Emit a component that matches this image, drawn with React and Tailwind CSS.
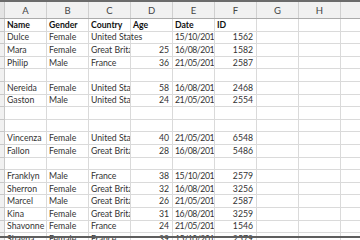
const cols = ["A", "B", "C", "D", "E", "F", "G", "H", ""];

const rows = [
  { head: true, cells: ["Name", "Gender", "Country", "Age", "Date", "ID"] },
  { cells: ["Dulce", "Female", "United States", "", "15/10/201", "1562"], spill: true },
  { cells: ["Mara", "Female", "Great Britain", "25", "16/08/201", "1582"] },
  { cells: ["Philip", "Male", "France", "36", "21/05/201", "2587"] },
  { cells: [] },
  { cells: ["Nereida", "Female", "United States", "58", "16/08/201", "2468"] },
  { cells: ["Gaston", "Male", "United States", "24", "21/05/201", "2554"] },
  { cells: [] },
  { cells: [] },
  { cells: ["Vincenza", "Female", "United States", "40", "21/05/201", "6548"] },
  { cells: ["Fallon", "Female", "Great Britain", "28", "16/08/201", "5486"] },
  { cells: [] },
  { cells: ["Franklyn", "Male", "France", "38", "15/10/201", "2579"] },
  { cells: ["Sherron", "Female", "Great Britain", "32", "16/08/201", "3256"] },
  { cells: ["Marcel", "Male", "Great Britain", "26", "21/05/201", "2587"] },
  { cells: ["Kina", "Female", "Great Britain", "31", "16/08/201", "3259"] },
  { cells: ["Shavonne", "Female", "France", "24", "21/05/201", "1546"] },
  { cells: ["Shayna", "Female", "France", "39", "15/10/201", "2579"] },
];

function Cell({ value, index, head, spill }) {
  const numeric = index === 3 || index === 5;
  const overflow = spill && index === 2 ? "overflow-visible z-10" : "overflow-hidden";
  const date = index === 4 && !head ? "tracking-[-0.45px]" : "";
  return (
    <div
      className={`relative flex h-full w-[42px] shrink-0 items-end border-r border-b border-[#dadada] pb-[1px] ${overflow} ${
        numeric && !head ? "justify-end pr-[3px]" : "pl-[2px]"
      }`}
    >
      <span className={`whitespace-nowrap ${date} ${head ? "font-bold text-[#111]" : "text-[#333]"}`}>{value}</span>
    </div>
  );
}

export default function App() {
  return (
    <div
      className="relative h-[240px] w-[360px] overflow-hidden bg-white text-[8.7px] leading-none"
      style={{ fontFamily: "Lato, 'Liberation Sans', sans-serif" }}
    >
      <div className="h-[2px] bg-[#6b6b6b]" />
      <div className="flex h-[17px] border-b border-[#ababab] bg-[#f1f1f1]">
        <div className="w-[5px] shrink-0 border-r border-[#c8c8c8] bg-[#e4e4e4]" />
        {cols.map((c, i) => (
          <div
            key={i}
            className="flex w-[42px] shrink-0 items-center justify-center border-r border-[#d0d0d0] pt-[2px] text-[9.5px] text-[#444]"
          >
            {c}
          </div>
        ))}
      </div>
      {rows.map((r, ri) => (
        <div key={ri} className="flex h-[12.6px]">
          <div className="w-[5px] shrink-0 border-r border-b border-[#c8c8c8] bg-[#f1f1f1]" />
          {cols.map((_, ci) => (
            <Cell key={ci} value={r.cells[ci] || ""} index={ci} head={r.head} spill={r.spill} />
          ))}
        </div>
      ))}
      <div className="absolute left-0 right-0 top-[236px] h-[2px] bg-[#5e5e5e]" />
    </div>
  );
}
